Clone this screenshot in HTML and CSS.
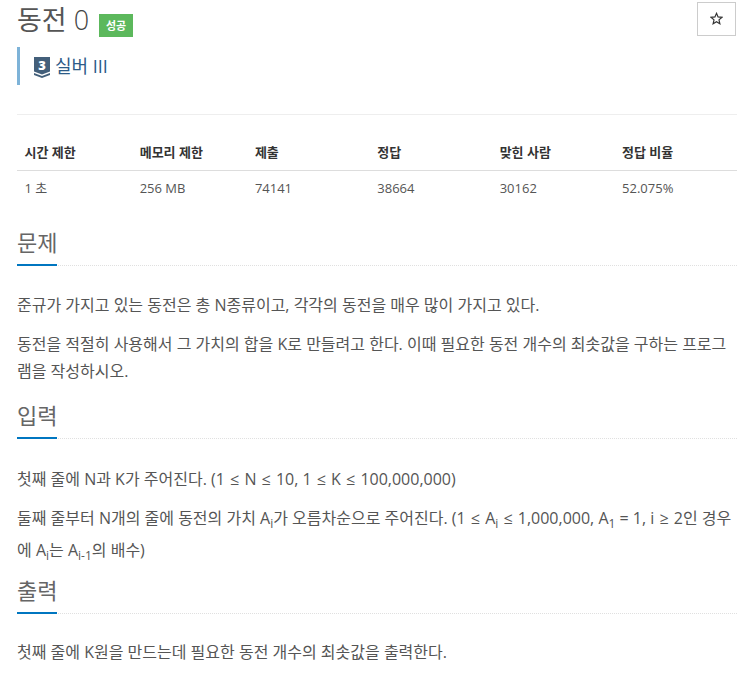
FILE: index.html
```html
<!DOCTYPE html>
<html lang="ko">
<head>
<meta charset="utf-8">
<title>동전 0</title>
<link rel="stylesheet" href="styles.css">
</head>
<body>
<main class="page">
  <header class="title-row">
    <div class="title-group">
      <h1 class="title">동전 <span class="title-num">0</span></h1>
      <span class="label">성공</span>
    </div>
    <button class="star-btn" type="button">
      <svg width="13" height="13" viewBox="0 0 24 24" class="star-icon"><path d="M12 2.500l2.900 6.600 7.100.7-5.400 4.800 1.600 7-6.200-3.700-6.200 3.700 1.600-7L2 9.800l7.100-.7z"/></svg>
    </button>
  </header>
  <div class="tier">
    <svg class="tier-icon" width="17" height="21" viewBox="0 0 17 21"><path class="tier-shield" d="M0 0h16v14.500l-8 3-8-3z"/><path class="tier-shield" d="M0 16l8 3 8-3v2l-8 3-8-3z"/><text x="8" y="13" text-anchor="middle" class="tier-num">3</text></svg>
    <span class="tier-name">실버 III</span>
  </div>
  <hr class="rule">
  <table class="info">
    <thead>
      <tr><th>시간 제한</th><th>메모리 제한</th><th>제출</th><th>정답</th><th>맞힌 사람</th><th>정답 비율</th></tr>
    </thead>
    <tbody>
      <tr><td>1 초</td><td>256 MB</td><td>74141</td><td>38664</td><td>30162</td><td>52.075%</td></tr>
    </tbody>
  </table>
  <section class="problem">
    <div class="headline"><h2>문제</h2></div>
    <div class="text">
      <p>준규가 가지고 있는 동전은 총 N종류이고, 각각의 동전을 매우 많이 가지고 있다.</p>
      <p>동전을 적절히 사용해서 그 가치의 합을 K로 만들려고 한다. 이때 필요한 동전 개수의 최솟값을 구하는 프로그램을 작성하시오.</p>
    </div>
  </section>
  <section class="input">
    <div class="headline"><h2>입력</h2></div>
    <div class="text">
      <p>첫째 줄에 N과 K가 주어진다. (1 <span class="le">≤</span> N <span class="le">≤</span> 10, 1 <span class="le">≤</span> K <span class="le">≤</span> 100,000,000)</p>
      <p>둘째 줄부터 N개의 줄에 동전의 가치 A<sub>i</sub>가 오름차순으로 주어진다. (1 <span class="le">≤</span> A<sub>i</sub> <span class="le">≤</span> 1,000,000, A<sub>1</sub> = 1, i <span class="le">≥</span> 2인 경우에 A<sub>i</sub>는 A<sub>i-1</sub>의 배수)</p>
    </div>
  </section>
  <section class="output">
    <div class="headline"><h2>출력</h2></div>
    <div class="text">
      <p>첫째 줄에 K원을 만드는데 필요한 동전 개수의 최솟값을 출력한다.</p>
    </div>
  </section>
</main>
</body>
</html>
```
FILE: styles.css
```css
* { box-sizing: border-box; }
html, body { margin: 0; padding: 0; background: #fff; }
body {
  font-family: "Open Sans", "Noto Sans CJK KR", sans-serif;
  font-size: 14px;
  line-height: 1.43;
  color: #555;
  overflow: hidden;
}
.page { width: 720px; margin-left: 17px; }
.title-row { display: flex; justify-content: space-between; align-items: flex-start; height: 47px; padding-top: 2px; }
.title-group { display: flex; align-items: flex-start; gap: 10px; }
.title { margin: 0; font-size: 27px; font-weight: 400; line-height: 36px; color: #555; }
.title-num { font-weight: 300; color: #444; }
.label { margin-top: 12px; width: 34px; height: 23px; background: #5cb85c; color: #fff; font-size: 11px; font-weight: 700; display: flex; align-items: center; justify-content: center; }
.star-btn { width: 39px; height: 34px; margin-right: 1px; background: #fff; border: 1px solid #ccc; padding: 0 0 2px; display: flex; align-items: center; justify-content: center; }
.star-icon { fill: #fff; stroke: #333; stroke-width: 2.200; }
.tier { height: 38px; border-left: 3px solid #7eb3d8; padding-left: 14px; display: flex; align-items: center; gap: 4px; padding-top: 2px; }
.tier-icon { flex: none; }
.tier-shield { fill: #435f7a; }
.tier-num { font-family: "Open Sans", sans-serif; font-size: 13px; font-weight: 800; fill: #fff; }
.tier-name { font-size: 18px; font-weight: 400; color: #2d5b88; line-height: 24px; margin-top: -2px; }
.rule { margin: 29px 0 0; border: 0; border-top: 1px solid #eee; }
.info { width: 720px; border-collapse: collapse; table-layout: fixed; margin-top: 20px; font-size: 13px; color: #555; }
.info th { width: 17%; text-align: left; font-weight: 700; color: #333; padding: 8px 8px 8px 7.500px; height: 35px; border-bottom: 1px solid #ddd; }
.info th:nth-child(1), .info th:nth-child(2) { width: 16%; }
.info td { padding: 8px 8px 8px 7.500px; height: 36px; }
.headline { border-bottom: 1px dotted #e0e0e0; height: 40px; }
.problem .headline { margin-top: 20px; }
.input .headline { margin-top: 14px; }
.output .headline { margin-top: 5px; }
.headline h2 { margin: 0; display: inline-block; width: 40px; height: 40px; font-size: 22px; font-weight: 400; line-height: 33px; border-bottom: 2px solid #0076c0; color: #666; white-space: nowrap; }
.text { padding-top: 26px; font-size: 16px; line-height: 27px; }
.input .text { padding-top: 27px; }
.output .text { padding-top: 25px; }
.text p { margin: 0 0 12px; }
.text p:last-child { margin-bottom: 0; }
.le { margin: 0 1px; }
sub { font-size: 75%; }
```
